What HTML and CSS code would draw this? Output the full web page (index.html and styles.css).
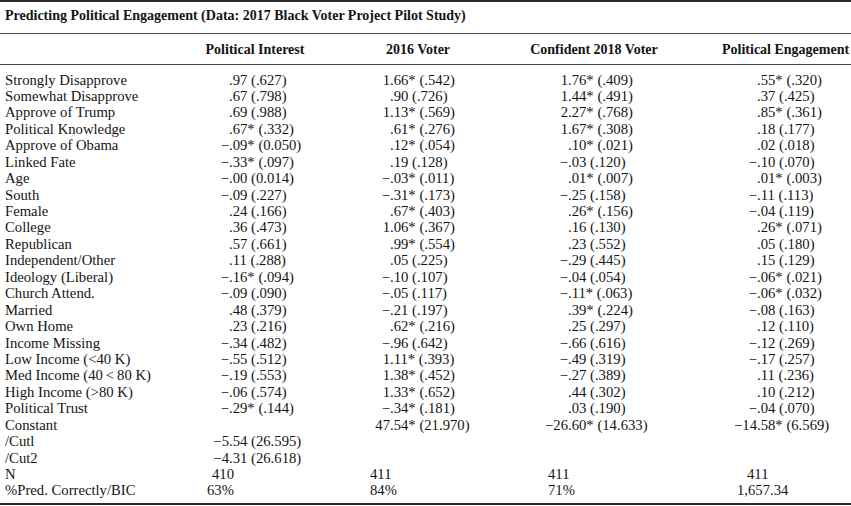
FILE: index.html
```html
<!DOCTYPE html>
<html lang="en">
<head>
<meta charset="utf-8">
<title>Predicting Political Engagement</title>
<link rel="stylesheet" href="styles.css">
</head>
<body>
<div class="table">
  <div class="caption">Predicting Political Engagement (Data: 2017 Black Voter Project Pilot Study)</div>
  <div class="head row">
    <div></div>
    <div class="h">Political Interest</div>
    <div class="h">2016 Voter</div>
    <div class="h">Confident 2018 Voter</div>
    <div class="h h4">Political Engagement</div>
  </div>
  <div class="body">
    <div class="row"><div>Strongly Disapprove</div><div class="v"><span class="ip"></span>.97 (.627)</div><div class="v"><span class="ip">1</span>.66* (.542)</div><div class="v"><span class="ip">1</span>.76* (.409)</div><div class="v"><span class="ip"></span>.55* (.320)</div></div>
    <div class="row"><div>Somewhat Disapprove</div><div class="v"><span class="ip"></span>.67 (.798)</div><div class="v"><span class="ip"></span>.90 (.726)</div><div class="v"><span class="ip">1</span>.44* (.491)</div><div class="v"><span class="ip"></span>.37 (.425)</div></div>
    <div class="row"><div>Approve of Trump</div><div class="v"><span class="ip"></span>.69 (.988)</div><div class="v"><span class="ip">1</span>.13* (.569)</div><div class="v"><span class="ip">2</span>.27* (.768)</div><div class="v"><span class="ip"></span>.85* (.361)</div></div>
    <div class="row"><div>Political Knowledge</div><div class="v"><span class="ip"></span>.67* (.332)</div><div class="v"><span class="ip"></span>.61* (.276)</div><div class="v"><span class="ip">1</span>.67* (.308)</div><div class="v"><span class="ip"></span>.18 (.177)</div></div>
    <div class="row"><div>Approve of Obama</div><div class="v"><span class="ip">−</span>.09* (0.050)</div><div class="v"><span class="ip"></span>.12* (.054)</div><div class="v"><span class="ip"></span>.10* (.021)</div><div class="v"><span class="ip"></span>.02 (.018)</div></div>
    <div class="row"><div>Linked Fate</div><div class="v"><span class="ip">−</span>.33* (.097)</div><div class="v"><span class="ip"></span>.19 (.128)</div><div class="v"><span class="ip">−</span>.03 (.120)</div><div class="v"><span class="ip">−</span>.10 (.070)</div></div>
    <div class="row"><div>Age</div><div class="v"><span class="ip">−</span>.00 (0.014)</div><div class="v"><span class="ip">−</span>.03* (.011)</div><div class="v"><span class="ip"></span>.01* (.007)</div><div class="v"><span class="ip"></span>.01* (.003)</div></div>
    <div class="row"><div>South</div><div class="v"><span class="ip">−</span>.09 (.227)</div><div class="v"><span class="ip">−</span>.31* (.173)</div><div class="v"><span class="ip">−</span>.25 (.158)</div><div class="v"><span class="ip">−</span>.11 (.113)</div></div>
    <div class="row"><div>Female</div><div class="v"><span class="ip"></span>.24 (.166)</div><div class="v"><span class="ip"></span>.67* (.403)</div><div class="v"><span class="ip"></span>.26* (.156)</div><div class="v"><span class="ip">−</span>.04 (.119)</div></div>
    <div class="row"><div>College</div><div class="v"><span class="ip"></span>.36 (.473)</div><div class="v"><span class="ip">1</span>.06* (.367)</div><div class="v"><span class="ip"></span>.16 (.130)</div><div class="v"><span class="ip"></span>.26* (.071)</div></div>
    <div class="row"><div>Republican</div><div class="v"><span class="ip"></span>.57 (.661)</div><div class="v"><span class="ip"></span>.99* (.554)</div><div class="v"><span class="ip"></span>.23 (.552)</div><div class="v"><span class="ip"></span>.05 (.180)</div></div>
    <div class="row"><div>Independent/Other</div><div class="v"><span class="ip"></span>.11 (.288)</div><div class="v"><span class="ip"></span>.05 (.225)</div><div class="v"><span class="ip">−</span>.29 (.445)</div><div class="v"><span class="ip"></span>.15 (.129)</div></div>
    <div class="row"><div>Ideology (Liberal)</div><div class="v"><span class="ip">−</span>.16* (.094)</div><div class="v"><span class="ip">−</span>.10 (.107)</div><div class="v"><span class="ip">−</span>.04 (.054)</div><div class="v"><span class="ip">−</span>.06* (.021)</div></div>
    <div class="row"><div>Church Attend.</div><div class="v"><span class="ip">−</span>.09 (.090)</div><div class="v"><span class="ip">−</span>.05 (.117)</div><div class="v"><span class="ip">−</span>.11* (.063)</div><div class="v"><span class="ip">−</span>.06* (.032)</div></div>
    <div class="row"><div>Married</div><div class="v"><span class="ip"></span>.48 (.379)</div><div class="v"><span class="ip">−</span>.21 (.197)</div><div class="v"><span class="ip"></span>.39* (.224)</div><div class="v"><span class="ip">−</span>.08 (.163)</div></div>
    <div class="row"><div>Own Home</div><div class="v"><span class="ip"></span>.23 (.216)</div><div class="v"><span class="ip"></span>.62* (.216)</div><div class="v"><span class="ip"></span>.25 (.297)</div><div class="v"><span class="ip"></span>.12 (.110)</div></div>
    <div class="row"><div>Income Missing</div><div class="v"><span class="ip">−</span>.34 (.482)</div><div class="v"><span class="ip">−</span>.96 (.642)</div><div class="v"><span class="ip">−</span>.66 (.616)</div><div class="v"><span class="ip">−</span>.12 (.269)</div></div>
    <div class="row"><div>Low Income (&lt;40 K)</div><div class="v"><span class="ip">−</span>.55 (.512)</div><div class="v"><span class="ip">1</span>.11* (.393)</div><div class="v"><span class="ip">−</span>.49 (.319)</div><div class="v"><span class="ip">−</span>.17 (.257)</div></div>
    <div class="row"><div>Med Income (40&thinsp;&lt;&thinsp;80 K)</div><div class="v"><span class="ip">−</span>.19 (.553)</div><div class="v"><span class="ip">1</span>.38* (.452)</div><div class="v"><span class="ip">−</span>.27 (.389)</div><div class="v"><span class="ip"></span>.11 (.236)</div></div>
    <div class="row"><div>High Income (&gt;80 K)</div><div class="v"><span class="ip">−</span>.06 (.574)</div><div class="v"><span class="ip">1</span>.33* (.652)</div><div class="v"><span class="ip"></span>.44 (.302)</div><div class="v"><span class="ip"></span>.10 (.212)</div></div>
    <div class="row"><div>Political Trust</div><div class="v"><span class="ip">−</span>.29* (.144)</div><div class="v"><span class="ip">−</span>.34* (.181)</div><div class="v"><span class="ip"></span>.03 (.190)</div><div class="v"><span class="ip">−</span>.04 (.070)</div></div>
    <div class="row"><div>Constant</div><div class="v"></div><div class="v"><span class="ip">47</span>.54* (21.970)</div><div class="v"><span class="ip">−26</span>.60* (14.633)</div><div class="v"><span class="ip">−14</span>.58* (6.569)</div></div>
    <div class="row"><div>/Cutl</div><div class="v"><span class="ip">−5</span>.54 (26.595)</div><div class="v"></div><div class="v"></div><div class="v"></div></div>
    <div class="row"><div>/Cut2</div><div class="v"><span class="ip">−4</span>.31 (26.618)</div><div class="v"></div><div class="v"></div><div class="v"></div></div>
    <div class="row"><div>N</div><div class="p">410</div><div class="p">411</div><div class="p">411</div><div class="p">411</div></div>
    <div class="row"><div>%Pred. Correctly/BIC</div><div class="p p-pct">63%</div><div class="p">84%</div><div class="p">71%</div><div class="p p-bic">1,657.34</div></div>
  </div>
</div>
</body>
</html>
```

FILE: styles.css
```css
html, body {
  margin: 0;
  padding: 0;
  background: #ffffff;
}

body {
  font-family: "Liberation Serif", "Times New Roman", serif;
  font-size: 14.7px;
  color: #141414;
  width: 851px;
  overflow: hidden;
}

.table {
  border-top: 2px solid #2a2a2a;
  border-bottom: 2px solid #2a2a2a;
  margin-bottom: 1px;
}

.caption {
  font-weight: bold;
  font-size: 14px;
  line-height: 16px;
  padding: 6px 5px 9px;
  border-bottom: 1px solid #4a4a4a;
  white-space: nowrap;
}

.row {
  display: grid;
  grid-template-columns: 165px 170px 156px 196px 159px;
  padding-left: 5px;
  height: 16.45px;
  line-height: 16.45px;
  white-space: nowrap;
}

.head {
  height: 16px;
  line-height: 16px;
  padding-top: 8px;
  padding-bottom: 6px;
  border-bottom: 1px solid #4a4a4a;
  font-weight: bold;
  font-size: 14px;
}

.h {
  text-align: center;
}

.h4 {
  text-align: left;
  padding-left: 30px;
}

.body {
  padding-top: 6.5px;
  padding-bottom: 3.8px;
}

.ip {
  display: inline-block;
  width: 40px;
  text-align: right;
}

.row > .v:nth-child(2) { padding-left: 19px; }
.row > .v:nth-child(3) { padding-left: 10px; }
.row > .v:nth-child(4) { padding-left: 32px; }
.row > .v:nth-child(5) { padding-left: 25px; }

.row > .p:nth-child(2) { padding-left: 42px; }
.row > .p:nth-child(3) { padding-left: 30px; }
.row > .p:nth-child(4) { padding-left: 52px; }
.row > .p:nth-child(5) { padding-left: 55px; }

.row > .p-pct:nth-child(2) { padding-left: 37px; }
.row > .p-bic:nth-child(5) { padding-left: 45px; }
```
